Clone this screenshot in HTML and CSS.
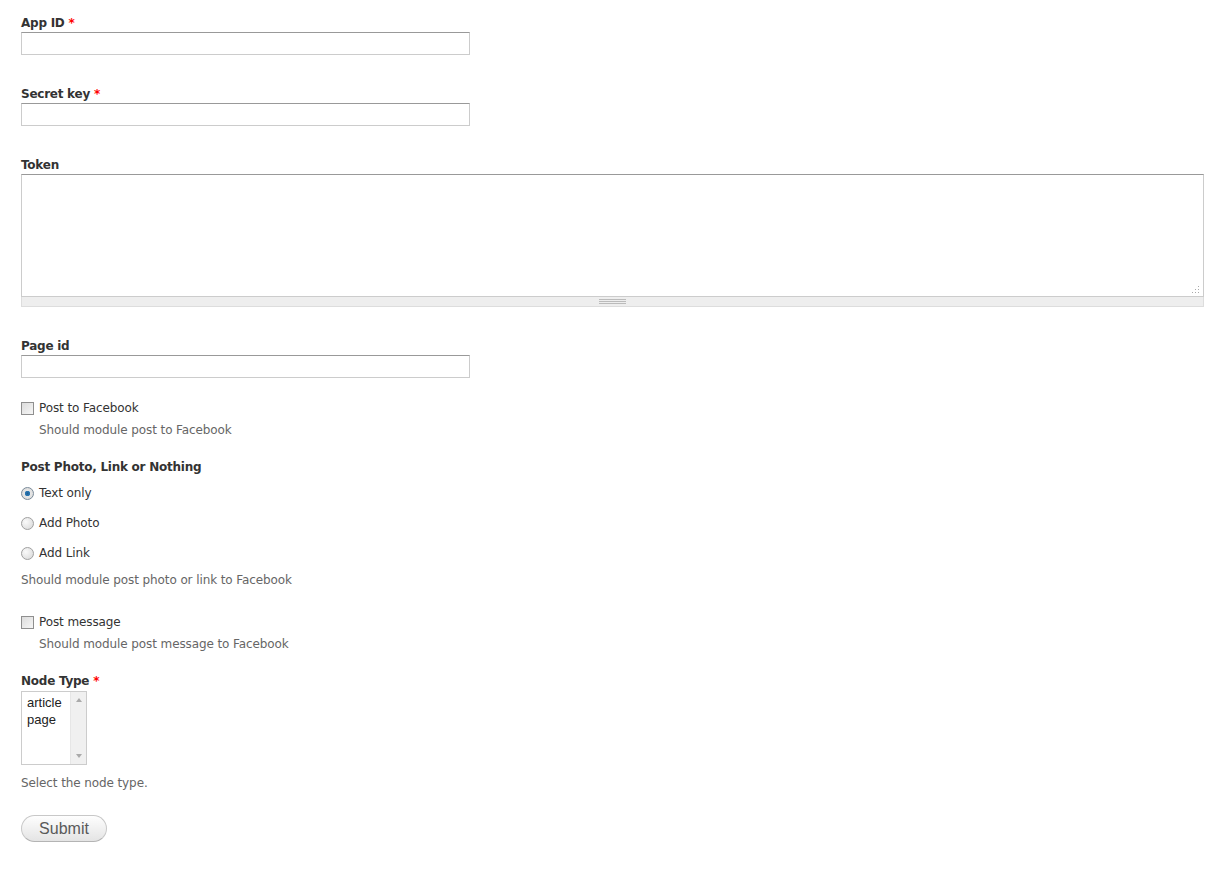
FILE: index.html
```html
<!DOCTYPE html>
<html lang="en">
<head>
    <meta charset="UTF-8">
    <title>Facebook settings</title>
    <link rel="stylesheet" href="styles.css">
</head>
<body>
    <form class="settings-form">
        <div class="form-item">
            <label class="field-label">App ID <span class="required">*</span></label>
            <input class="form-text" type="text">
        </div>

        <div class="form-item">
            <label class="field-label">Secret key <span class="required">*</span></label>
            <input class="form-text" type="text">
        </div>

        <div class="form-item">
            <label class="field-label">Token</label>
            <div class="textarea-wrap">
                <textarea class="form-textarea"></textarea>
                <svg class="resize-dots" width="8" height="8" viewBox="0 0 8 8">
                    <rect x="6" y="0" width="1" height="1" fill="#aaa"/>
                    <rect x="3" y="3" width="1" height="1" fill="#aaa"/>
                    <rect x="6" y="3" width="1" height="1" fill="#aaa"/>
                    <rect x="0" y="6" width="1" height="1" fill="#aaa"/>
                    <rect x="3" y="6" width="1" height="1" fill="#aaa"/>
                    <rect x="6" y="6" width="1" height="1" fill="#aaa"/>
                </svg>
                <div class="grippie"><span class="grip-lines"></span></div>
            </div>
        </div>

        <div class="form-item item-page">
            <label class="field-label">Page id</label>
            <input class="form-text" type="text">
        </div>

        <div class="form-item item-check">
            <label class="option"><input class="check" type="checkbox"> Post to Facebook</label>
            <div class="description indent">Should module post to Facebook</div>
        </div>

        <div class="form-item item-radios">
            <label class="field-label">Post Photo, Link or Nothing</label>
            <label class="option radio-row first"><input class="radio" type="radio" name="mode" checked> Text only</label>
            <label class="option radio-row"><input class="radio" type="radio" name="mode"> Add Photo</label>
            <label class="option radio-row"><input class="radio" type="radio" name="mode"> Add Link</label>
            <div class="description after-radios">Should module post photo or link to Facebook</div>
        </div>

        <div class="form-item item-message">
            <label class="option"><input class="check" type="checkbox"> Post message</label>
            <div class="description indent">Should module post message to Facebook</div>
        </div>

        <div class="form-item item-node">
            <label class="field-label">Node Type <span class="required">*</span></label>
            <div class="listbox">
                <div class="listbox-options">
                    <div>article</div>
                    <div>page</div>
                </div>
                <div class="listbox-scroll">
                    <span class="arrow-up"></span>
                    <span class="arrow-down"></span>
                </div>
            </div>
            <div class="description node-desc">Select the node type.</div>
        </div>

        <button class="form-submit" type="button">Submit</button>
    </form>
</body>
</html>
```

FILE: styles.css
```css
body {
    margin: 0;
    background: #fff;
    font-family: "DejaVu Sans", Verdana, sans-serif;
    font-size: 12px;
    color: #333;
}
.settings-form {
    padding: 14px 20px 0 21px;
}
.form-item {
    margin-bottom: 30px;
}
.field-label {
    display: block;
    font-weight: bold;
    font-size: 12px;
    letter-spacing: -0.25px;
    line-height: 14px;
    padding-top: 2px;
    margin-bottom: 2px;
    color: #333;
}
.required {
    color: #f00;
}
.form-text {
    display: block;
    box-sizing: border-box;
    width: 449px;
    height: 23px;
    margin: 0;
    padding: 2px;
    border: 1px solid #ccc;
    border-top-color: #999;
    background: #fff;
}
.textarea-wrap {
    position: relative;
    width: 1183px;
}
.form-textarea {
    display: block;
    box-sizing: border-box;
    width: 100%;
    height: 123px;
    margin: 0;
    border: 1px solid #ccc;
    border-top-color: #999;
    resize: none;
    background: #fff;
}
.resize-dots {
    position: absolute;
    right: 4px;
    top: 112px;
}
.grippie {
    box-sizing: border-box;
    height: 10px;
    background: #eee;
    border: 1px solid #ddd;
    border-top: none;
    display: flex;
    justify-content: center;
    align-items: center;
}
.grip-lines {
    width: 27px;
    height: 5px;
    border-top: 1px solid #bbb;
    border-bottom: 1px solid #bbb;
    background: linear-gradient(#bbb, #bbb) center / 100% 1px no-repeat;
    box-sizing: border-box;
}
.form-item.item-check {
    margin-top: -9px;
    margin-bottom: 21px;
}
.option {
    display: flex;
    align-items: center;
    line-height: 14px;
    padding-top: 2px;
    font-size: 12px;
    letter-spacing: -0.1px;
    color: #333;
}
.check,
.radio {
    appearance: none;
    -webkit-appearance: none;
    width: 13px;
    height: 13px;
    margin: 0 5px 0 0;
    box-sizing: border-box;
    border: 1px solid #8f8f8f;
    background: linear-gradient(135deg, #dcdcdc, #f6f6f6);
    flex: none;
}
.radio {
    border-radius: 50%;
    border-color: #a0a0a0;
    background: radial-gradient(circle at 35% 35%, #fafafa, #d6d6d6);
}
.radio:checked {
    background: radial-gradient(circle, #1e5d91 0, #2d7bb8 2.5px, #e6e6e6 3px, #d6d6d6 100%);
    border-color: #7a8a99;
}
.description {
    color: #666;
    font-size: 12px;
    letter-spacing: -0.1px;
    line-height: 14px;
    padding-top: 2px;
}
.indent {
    margin-top: 6px;
    padding-left: 18px;
}
.item-radios .field-label {
    margin-bottom: 10px;
}
.form-item.item-radios {
    margin-bottom: 26px;
}
.radio-row {
    margin-bottom: 14px;
}
.after-radios {
    margin-top: -3px;
}
.form-item.item-message {
    margin-bottom: 21px;
}
.item-node .field-label {
    margin-bottom: 3px;
}
.listbox {
    display: flex;
    box-sizing: border-box;
    width: 66px;
    height: 74px;
    border: 1px solid #ccc;
    background: #fff;
}
.listbox-options {
    flex: 1;
    padding: 2px 0 0 5px;
    font-family: "Liberation Sans", Arial, sans-serif;
    font-size: 13px;
    line-height: 17px;
    color: #222;
}
.listbox-scroll {
    width: 16px;
    background: #f0f0f0;
    border-left: 1px solid #e6e6e6;
    display: flex;
    flex-direction: column;
    justify-content: space-between;
    align-items: center;
    padding: 6px 0;
    box-sizing: border-box;
}
.arrow-up {
    width: 0;
    height: 0;
    border-left: 3px solid transparent;
    border-right: 3px solid transparent;
    border-bottom: 4px solid #aaa;
}
.arrow-down {
    width: 0;
    height: 0;
    border-left: 3px solid transparent;
    border-right: 3px solid transparent;
    border-top: 4px solid #aaa;
}
.node-desc {
    margin-top: 9px;
}
.form-item.item-node {
    margin-bottom: 25px;
}
.form-submit {
    display: block;
    width: 86px;
    height: 27px;
    margin: 0;
    padding: 0;
    border: 1px solid #c8c8c8;
    border-bottom-color: #b4b4b4;
    border-radius: 14px;
    background: linear-gradient(#fefefe, #e4e4e4);
    font-family: "Liberation Sans", Arial, sans-serif;
    font-size: 16px;
    color: #5a5a5a;
    cursor: pointer;
}
```
